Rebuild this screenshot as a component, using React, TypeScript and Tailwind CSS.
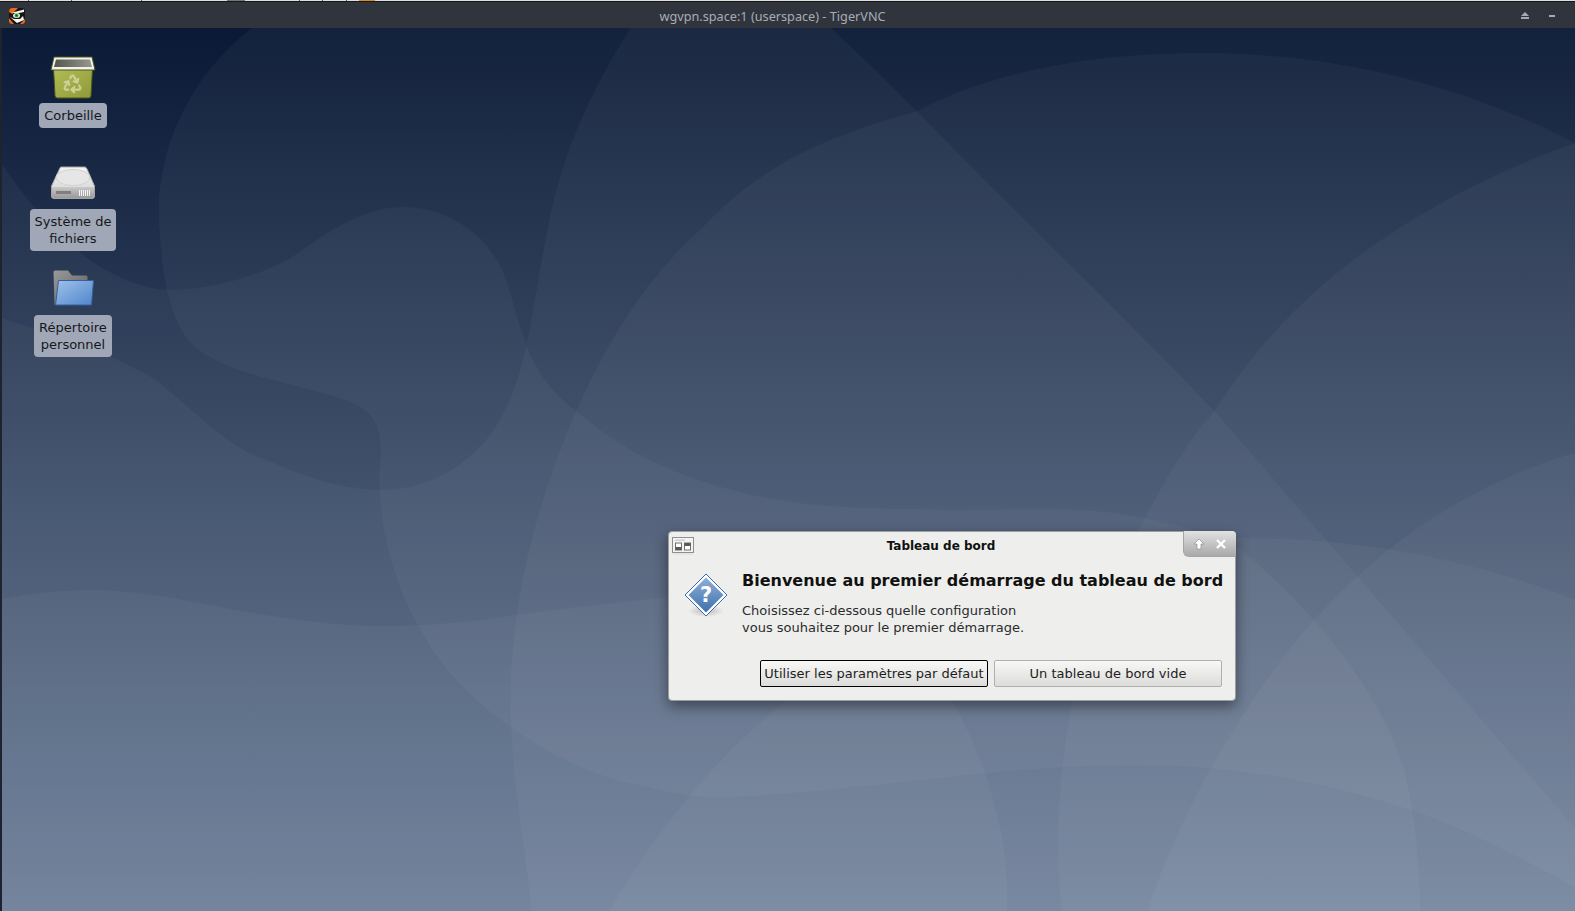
import { Recycle } from 'lucide-react';

const sans = 'font-["DejaVu_Sans",sans-serif]';

// every lobe of the wallpaper adds the same faint white, y starts under the title bar
const lobes = [
  'M250 0C185 50 150 130 158 205C160 235 163 250 165 261C172 290 180 308 196 321C240 355 340 360 366 384C378 396 380 412 379 429C378 445 377 452 378 460C380 510 395 560 417 598C440 640 470 672 511 700C560 735 605 752 647 759C675 767 705 771 733 769C870 762 1000 737 1131 737C1240 737 1330 755 1420 785C1475 805 1530 835 1575 859V0Z',
  'M629 0H830C860 28 888 55 916 83C1010 180 1120 285 1214 383C1350 540 1480 690 1575 800V883H0V290C60 310 110 325 156 353C200 390 230 422 268 433C305 450 345 462 379 462C420 462 455 445 482 415C505 390 518 350 525 317C535 270 542 215 553 170C570 105 595 55 629 0Z',
  'M0 136C40 195 90 250 156 261C200 265 250 250 286 232C325 205 360 179 402 179C445 179 485 205 502 245C510 265 515 290 525 317C535 345 553 367 576 384C630 430 690 455 766 470C830 482 890 480 952 482C1020 482 1085 478 1131 488C1180 498 1215 505 1241 522C1310 580 1380 660 1405 745C1415 790 1420 840 1420 883H0Z',
  'M530 883C525 820 509 750 509 670C510 570 535 475 575 383C610 305 650 245 701 200C765 130 840 105 916 83C1000 40 1100 25 1203 25C1340 25 1470 60 1575 115V883Z',
  'M1061 883C1052 800 1055 640 1139 500C1160 460 1185 415 1214 383C1245 335 1275 300 1311 267C1390 195 1490 145 1575 115V883Z',
  'M1575 425C1470 455 1370 520 1290 620C1220 710 1170 810 1147 883H1575Z',
  'M0 571C30 565 60 562 89 562C130 562 175 570 223 580C280 590 330 598 379 598C425 598 470 594 513 587C565 580 615 575 667 569C800 550 1000 510 1236 510C1358 510 1470 530 1575 572V883H0Z',
  'M608 883C650 810 720 720 790 670H950C990 740 1010 820 1006 883Z',
];

function Wallpaper() {
  return (
    <svg className="absolute inset-0 h-full w-full" viewBox="0 0 1575 883" preserveAspectRatio="none">
      <defs>
        <linearGradient id="wall" x1="0" y1="0" x2="0" y2="1">
          <stop offset="0" stopColor="#0a1935" />
          <stop offset="1" stopColor="#667995" />
        </linearGradient>
      </defs>
      <rect width="1575" height="883" fill="url(#wall)" />
      {lobes.map(d => (
        <path key={d} d={d} fill="#fff" fillOpacity="0.035" />
      ))}
    </svg>
  );
}

function TrashIcon() {
  return (
    <svg width="46" height="43" viewBox="0 0 46 43">
      <defs>
        <linearGradient id="trash" x1="0" y1="0" x2="1" y2="1">
          <stop offset="0" stopColor="#b4bd57" />
          <stop offset="1" stopColor="#8d9a38" />
        </linearGradient>
        <linearGradient id="trashIn" x1="0" y1="0" x2="1" y2="0">
          <stop offset="0" stopColor="#55574f" />
          <stop offset="1" stopColor="#96988f" />
        </linearGradient>
      </defs>
      <path d="M3.500 12H42.500L41 39.500Q41 42 38.500 42H7.500Q5 42 5 39.500Z" fill="url(#trash)" stroke="#4e5518" strokeWidth="1" />
      <path d="M4 1H42L45 14H1Z" fill="#f1f2ec" stroke="#4e5518" strokeWidth="1" />
      <path d="M6 3.500H40L42 11H4Z" fill="url(#trashIn)" />
    </svg>
  );
}

function DriveIcon() {
  return (
    <svg width="44" height="33" viewBox="0 0 44 33">
      <defs>
        <linearGradient id="drive" x1="0" y1="0" x2="0" y2="1">
          <stop offset="0" stopColor="#f4f4f4" />
          <stop offset="1" stopColor="#d0d0d0" />
        </linearGradient>
        <linearGradient id="driveFront" x1="0" y1="0" x2="0" y2="1">
          <stop offset="0" stopColor="#c9c9c9" />
          <stop offset="1" stopColor="#9a9a9a" />
        </linearGradient>
      </defs>
      <path d="M10 1H34Q35 1 36 3L43.500 20V30Q43.500 32.500 41 32.500H3Q0.500 32.500 0.500 30V20L8.500 3Q9 1 10 1Z" fill="url(#drive)" stroke="#a5a5a5" />
      <ellipse cx="22" cy="11.500" rx="17" ry="8" fill="#e6e6e6" stroke="#d2d2d2" />
      <path d="M1 21H43V30Q43 32 41 32H3Q1 32 1 30Z" fill="url(#driveFront)" />
      <rect x="5" y="25" width="15" height="3" fill="#7f7f7f" />
      <path d="M28.500 24v6M30.500 24v6M32.500 24v6M34.500 24v6M36.500 24v6M38.500 24v6" stroke="#f2f2f2" strokeWidth="1" />
    </svg>
  );
}

function FolderIcon() {
  return (
    <svg width="41" height="36" viewBox="0 0 41 36">
      <defs>
        <linearGradient id="folderBack" x1="0" y1="0" x2="1" y2="1">
          <stop offset="0" stopColor="#9a9a9a" />
          <stop offset="1" stopColor="#5c5c5c" />
        </linearGradient>
        <linearGradient id="folderFront" x1="0" y1="0" x2="1" y2="1">
          <stop offset="0" stopColor="#a0c1ea" />
          <stop offset="1" stopColor="#4f86cc" />
        </linearGradient>
      </defs>
      <path d="M0.500 2Q0.500 0.500 2 0.500H15L19 5.500H33Q34.500 5.500 34.500 7V12H6L3 35H1.500Z" fill="url(#folderBack)" />
      <path d="M5.500 10.500H40.500L38.500 35H2.500Z" fill="url(#folderFront)" stroke="#35609c" />
    </svg>
  );
}

function QuestionIcon() {
  return (
    <svg width="44" height="48" viewBox="0 0 44 48">
      <defs>
        <linearGradient id="diamond" x1="0" y1="0" x2="0" y2="1">
          <stop offset="0" stopColor="#8fb0d8" />
          <stop offset="1" stopColor="#3f70ad" />
        </linearGradient>
        <radialGradient id="diamondShadow">
          <stop offset="0" stopColor="#000" stopOpacity="0.22" />
          <stop offset="1" stopColor="#000" stopOpacity="0" />
        </radialGradient>
      </defs>
      <ellipse cx="22" cy="38" rx="18" ry="6" fill="url(#diamondShadow)" />
      <path d="M22 1L43 22L22 43L1 22Z" fill="#fff" stroke="#3c6aa6" strokeLinejoin="round" />
      <path d="M22 4.500L39.500 22L22 39.500L4.500 22Z" fill="url(#diamond)" />
      <text x="22" y="29" textAnchor="middle" fontSize="21" fontWeight="700" fill="#fff" fontFamily="DejaVu Sans">?</text>
    </svg>
  );
}

function VncIcon() {
  return (
    <svg width="16" height="16" viewBox="0 0 16 16">
      <rect width="16" height="16" rx="3" fill="#161616" />
      <path d="M0 4Q0 0 3 0H9L3 6ZM0 10L5 16H3Q0 16 0 13ZM11 16L16 11V13Q16 16 13 16Z" fill="#e8691f" />
      <path d="M2 5L15 1.500V4L10 5ZM1 9L5 11L11 11L14 8L15 12L8 15Z" fill="#f4f4f4" />
      <ellipse cx="7.500" cy="7.500" rx="3.500" ry="2.500" fill="#f4f4f4" />
      <circle cx="7.500" cy="7.500" r="2" fill="#35a838" />
      <circle cx="7.500" cy="7.500" r="0.800" fill="#0d3d10" />
    </svg>
  );
}

function WindowMenuIcon() {
  return (
    <svg width="22" height="18" viewBox="0 0 22 18">
      <rect x="0.500" y="0.500" width="21" height="15" fill="#f3f3f2" stroke="#8f8f8f" />
      <rect x="3" y="2.500" width="10" height="1.500" fill="#d2d2d2" />
      <rect x="3.500" y="6" width="6" height="7" fill="#fff" stroke="#707070" />
      <rect x="3.500" y="10" width="6" height="3" fill="#5a5a5a" />
      <rect x="12.500" y="6" width="6" height="7" fill="#fff" stroke="#707070" />
      <rect x="12.500" y="6" width="6" height="3" fill="#5a5a5a" />
      <rect x="1" y="16.500" width="20" height="1" fill="#dcdcdc" />
    </svg>
  );
}

function DesktopItem({ icon, label, iconBox, pill }: { icon: React.ReactNode; label: string[]; iconBox: string; pill: string }) {
  return (
    <div className="flex flex-col items-center">
      <div className={`flex items-end justify-center ${iconBox}`}>{icon}</div>
      <div className={`rounded-[4px] bg-[#a0a7b6] px-[5px] py-[4px] text-center text-[13px] leading-[17px] text-[#15171b] ${pill}`}>
        {label.map(line => (
          <div key={line}>{line}</div>
        ))}
      </div>
    </div>
  );
}

function Dialog() {
  return (
    <div className={`absolute left-[668px] top-[531px] flex h-[170px] w-[568px] flex-col rounded-[4px] border border-[#9a9da3] bg-[#eeeeec] shadow-[0_5px_14px_rgba(0,0,0,0.45)] ${sans}`}>
      <div className="relative flex h-[26px] shrink-0 items-center justify-center pr-[22px] pt-[1px]">
        <div className="absolute left-[3px] top-[5px] flex">
          <WindowMenuIcon />
        </div>
        <div className="text-[12px] font-bold text-[#101010]">Tableau de bord</div>
        <div className="absolute -right-px -top-px flex h-[26px] w-[53px] items-center justify-center gap-[10px] rounded-bl-[6px] rounded-tr-[4px] border-b border-l border-[#a5a5a5] bg-gradient-to-b from-[#e2e2e2] to-[#a9a9a9]">
          <svg width="12" height="12" viewBox="0 0 12 12">
            <path d="M6 1L11 6H8V11H4V6H1Z" fill="#fff" stroke="#8e8e8e" strokeWidth="0.700" />
          </svg>
          <svg width="12" height="12" viewBox="0 0 12 12">
            <path d="M2 2L10 10M10 2L2 10" stroke="#fff" strokeWidth="2.400" />
          </svg>
        </div>
      </div>
      <div className="flex pl-[15px] pr-[13px]">
        <div className="w-[58px] shrink-0 pt-[15px]">
          <QuestionIcon />
        </div>
        <div className="flex-1 pt-[13px]">
          <div className="whitespace-nowrap text-[16px] font-bold leading-[20px] text-[#111]">Bienvenue au premier démarrage du tableau de bord</div>
          <div className="mt-[11px] text-[13px] leading-[17px] text-[#2a2c2e]">
            <div>Choisissez ci-dessous quelle configuration</div>
            <div>vous souhaitez pour le premier démarrage.</div>
          </div>
        </div>
      </div>
      <div className="mt-[24px] flex justify-end gap-[6px] pr-[13px]">
        <button className="h-[27px] w-[228px] whitespace-nowrap rounded-[2px] border border-black bg-gradient-to-b from-[#f8f8f7] to-[#dcdcda] text-[13px] text-[#1d1d1d]">
          Utiliser les paramètres par défaut
        </button>
        <button className="h-[27px] w-[228px] whitespace-nowrap rounded-[2px] border border-[#b0b0ae] bg-gradient-to-b from-[#f8f8f7] to-[#dcdcda] text-[13px] text-[#1d1d1d]">
          Un tableau de bord vide
        </button>
      </div>
    </div>
  );
}

export default function App() {
  return (
    <div className={`relative flex h-[911px] w-[1575px] flex-col overflow-hidden bg-[#1f2330] ${sans}`}>
      {/* cut off top of the window behind */}
      <div className="flex h-[1px] shrink-0 bg-[#dedede]">
        <div className="ml-[28px] w-[1px] bg-[#555]" />
        <div className="ml-[42px] w-[1px] bg-[#555]" />
        <div className="ml-[69px] w-[1px] bg-[#555]" />
        <div className="ml-[85px] w-[18px] bg-[#777]" />
        <div className="ml-[54px] w-[1px] bg-[#555]" />
        <div className="ml-[22px] w-[1px] bg-[#555]" />
        <div className="ml-[23px] w-[1px] bg-[#555]" />
        <div className="ml-[12px] w-[16px] bg-[#d98a2a]" />
      </div>
      <div className="h-[1px] shrink-0 bg-[#16171a]" />

      {/* title bar */}
      <div className="relative flex h-[26px] shrink-0 items-center justify-center bg-[#30343d] pr-[30px] pt-[3px] font-['Noto_Sans',sans-serif] text-[12.7px] text-[#a8acb5]">
        <div className="absolute left-[9px] top-[6px]">
          <VncIcon />
        </div>
        <span>wgvpn.space:1 (userspace) - TigerVNC</span>
        <div className="absolute right-[20px] top-[10px] flex items-center gap-[20px]">
          <svg width="8" height="7" viewBox="0 0 8 7">
            <path d="M4 0L8 4H0Z M0 5H8V7H0Z" fill="#a4a9b5" />
          </svg>
          <div className="h-[2px] w-[6px] bg-[#a4a9b5]" />
        </div>
      </div>

      {/* desktop */}
      <div className="flex flex-1">
        <div className="w-[2px] shrink-0" />
        <div className="relative flex-1">
          <Wallpaper />
          <div className="relative flex w-[142px] flex-col">
            <DesktopItem
              iconBox="h-[71px]"
              pill="mt-[4px]"
              label={['Corbeille']}
              icon={
                <div className="relative flex">
                  <TrashIcon />
                  <Recycle className="absolute left-[12px] top-[17px] h-[21px] w-[21px] text-[#cdd196]" strokeWidth={2.500} />
                </div>
              }
            />
            <DesktopItem iconBox="h-[71px]" pill="mt-[10px]" label={['Système de', 'fichiers']} icon={<DriveIcon />} />
            <DesktopItem iconBox="h-[55px]" pill="mt-[9px]" label={['Répertoire', 'personnel']} icon={<FolderIcon />} />
          </div>
        </div>
      </div>

      <Dialog />
    </div>
  );
}
